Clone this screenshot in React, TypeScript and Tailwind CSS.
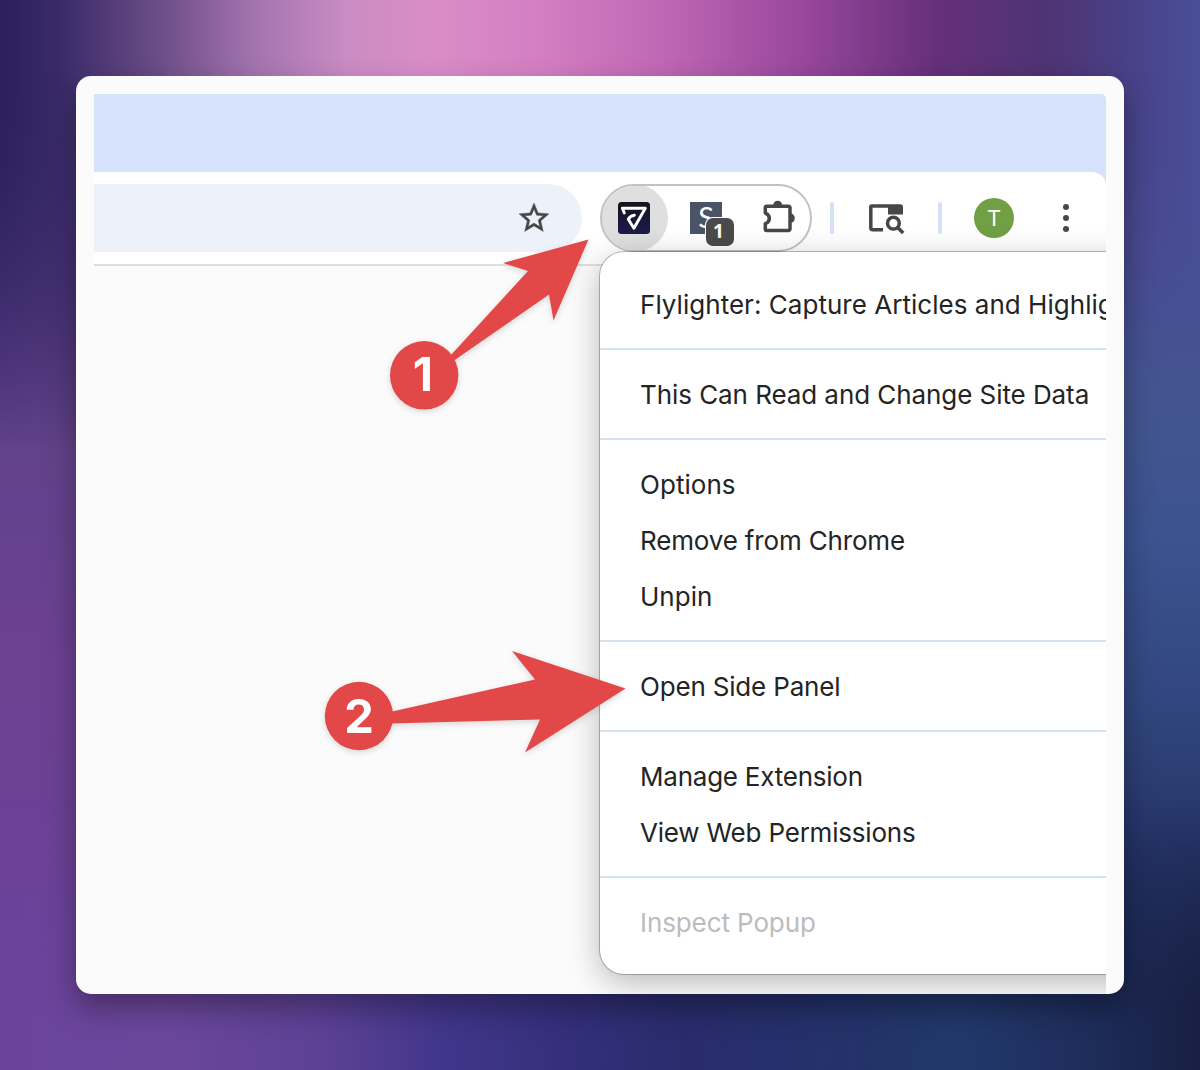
import React from "react";

const menuGroups: { label: string; tracking: string; muted?: boolean }[][] = [
  [{ label: "Flylighter: Capture Articles and Highlights", tracking: "tracking-[0.03px]" }],
  [{ label: "This Can Read and Change Site Data", tracking: "tracking-[-0.07px]" }],
  [
    { label: "Options", tracking: "tracking-[0.05px]" },
    { label: "Remove from Chrome", tracking: "tracking-[-0.16px]" },
    { label: "Unpin", tracking: "tracking-[0px]" },
  ],
  [{ label: "Open Side Panel", tracking: "tracking-[-0.18px]" }],
  [
    { label: "Manage Extension", tracking: "tracking-[-0.23px]" },
    { label: "View Web Permissions", tracking: "tracking-[-0.2px]" },
  ],
  [{ label: "Inspect Popup", tracking: "tracking-[-0.1px]", muted: true }],
];

function Wallpaper() {
  return (
    <div className="absolute inset-0 bg-[linear-gradient(90deg,#2b1f5e_0%,#3a2b68_5%,#6a4c86_13%,#a273ae_21%,#cb8cc4_29%,#d98dc8_36%,#d37fc2_45%,#c068b5_55%,#98479c_67%,#65307a_78%,#4f3372_87%,#483f85_93%,#494f98_100%)]">
      <div className="absolute inset-y-0 left-0 w-1/2 bg-[linear-gradient(180deg,#2e2160_0%,#39296a_15%,#4a3478_27%,#62428a_42%,#6c4192_62%,#6a429a_100%)] [mask-image:linear-gradient(180deg,transparent_7%,black_42%)]" />
      <div className="absolute inset-y-0 right-0 w-1/2 bg-[linear-gradient(180deg,#49468f_0%,#474f94_25%,#43558f_38%,#3c5390_50%,#32477f_65%,#253468_80%,#1a2348_100%)] [mask-image:linear-gradient(180deg,transparent_7%,black_34%)]" />
      <div className="absolute inset-x-0 bottom-0 h-[270px] bg-[linear-gradient(90deg,#6c439b_0%,#6b479b_14%,#5c4195_27%,#41368a_37%,#332f7a_48%,#292c6c_57%,#23336a_72%,#22386b_80%,#1e2c5a_91%,#182042_100%)] [mask-image:linear-gradient(180deg,transparent,black_80%)]" />
    </div>
  );
}

function StarIcon() {
  return (
    <svg width="36" height="36" viewBox="0 0 24 24" fill="#474747" stroke="#474747" strokeWidth="0.25">
      <path d="M22 9.24l-7.19-.62L12 2 9.19 8.63 2 9.24l5.46 4.73L5.82 21 12 17.27 18.18 21l-1.63-7.03L22 9.24zM12 15.4l-3.76 2.27 1-4.28-3.32-2.88 4.38-.38L12 6.1l1.71 4.04 4.38.38-3.32 2.88 1 4.28L12 15.4z" />
    </svg>
  );
}

function FlylighterIcon() {
  return (
    <svg width="32" height="32" viewBox="0 0 32 32">
      <defs>
        <linearGradient id="fly" x1="0" y1="0" x2="0" y2="1">
          <stop offset="0" stopColor="#14131d" />
          <stop offset="1" stopColor="#1c1c4c" />
        </linearGradient>
      </defs>
      <rect width="32" height="32" rx="3.5" fill="url(#fly)" />
      <path
        d="M6.3 11L4.4 6.200H27.300L15.900 26.200L10.300 17.200C11.600 14.900 13.600 13.500 16.400 13.200"
        fill="none"
        stroke="#fff"
        strokeWidth="2.900"
        strokeLinecap="round"
        strokeLinejoin="round"
      />
    </svg>
  );
}

function PuzzleIcon() {
  return (
    <svg width="36" height="36" viewBox="0 0 36 36">
      <path
        d="M4.800 6.200H26.500a1.500 1.500 0 0 1 1.500 1.500V29a1.500 1.500 0 0 1-1.500 1.500H4.800a1.500 1.500 0 0 1-1.500-1.500V23.600C5.800 22.800 7.300 21 7.300 18.300S5.800 14 3.300 13.100V7.700A1.500 1.500 0 0 1 4.800 6.200Z"
        fill="none"
        stroke="#474747"
        strokeWidth="3.500"
        strokeLinejoin="round"
      />
      <path d="M11.200 5.500a4.500 4.800 0 0 1 9 0ZM28.800 13.600a4 4.600 0 0 1 0 9.200Z" fill="#474747" />
    </svg>
  );
}

function TabSearchIcon() {
  return (
    <svg width="36" height="36" viewBox="0 0 36 36" fill="none" stroke="#474747">
      <path d="M14 29.800H3.800a2 2 0 0 1-2-2V6.800" strokeWidth="3.500" />
      <path d="M0 9V7a2.800 2.800 0 0 1 2.800-2.700H31.200A2.800 2.800 0 0 1 34 7V14.400H19V7.800H0Z" fill="#474747" stroke="none" />
      <circle cx="24.400" cy="23.200" r="5.900" strokeWidth="3.500" />
      <path d="M28.600 27.400L34.200 33" strokeWidth="3.500" />
    </svg>
  );
}

function Divider() {
  return <div className="h-8 w-1 shrink-0 rounded-sm bg-[#d5e1fa]" />;
}

function Toolbar() {
  return (
    <div className="bg-[#d6e2fb]">
      <div className="flex h-[94px] items-start rounded-tr-[14px] border-b-2 border-[#dedfe0] bg-white pt-3">
        <div className="flex h-[68px] w-[488px] shrink-0 items-center justify-end rounded-r-full bg-[#edf2fa] pr-[30px]">
          <StarIcon />
        </div>
        <div className="ml-[18px] flex h-[68px] w-[212px] shrink-0 items-center overflow-hidden rounded-full border-2 border-[#c2c2c2]">
          <div className="-ml-0.5 flex size-[68px] shrink-0 items-center justify-center rounded-full bg-[#dfdfdf] shadow-[inset_2px_0_0_0_#b5b5b5]">
            <FlylighterIcon />
          </div>
          <div className="relative ml-[22px] flex size-8 shrink-0 items-start justify-center bg-[#495466] font-['Lato'] text-[29px] leading-[30px] text-white">
            S
            <div className="absolute top-4 left-4 flex size-7 items-center justify-center rounded-[7px] bg-[#4b4b4b] pr-[3px] pb-px font-['Open_Sans'] text-[19px] leading-none font-bold shadow-[0_0_0_1px_#fff]">
              1
            </div>
          </div>
          <div className="ml-10 shrink-0">
            <PuzzleIcon />
          </div>
        </div>
        <div className="flex h-[68px] items-center pl-[18px]">
          <Divider />
          <div className="ml-[35px]">
            <TabSearchIcon />
          </div>
          <div className="ml-[33px]">
            <Divider />
          </div>
          <div className="ml-8 flex size-10 items-center justify-center rounded-full bg-[#719f45] font-['Roboto'] text-[22px] text-white">
            T
          </div>
          <div className="ml-[49px] flex flex-col gap-[5px]">
            <span className="size-1.5 rounded-full bg-[#474747]" />
            <span className="size-1.5 rounded-full bg-[#474747]" />
            <span className="size-1.5 rounded-full bg-[#474747]" />
          </div>
        </div>
      </div>
    </div>
  );
}

function ContextMenu() {
  return (
    <div className="absolute top-[158px] left-[506px] w-[640px] divide-y-2 divide-[#d6e2f2] rounded-3xl bg-white py-2 shadow-[0_0_0_1px_rgba(0,0,0,0.25),0_8px_32px_rgba(0,0,0,0.27)]">
      {menuGroups.map((group, i) => (
        <div key={i} className="py-4">
          {group.map((item) => (
            <div
              key={item.label}
              className={`flex h-14 items-center pt-px pl-10 text-[26px] whitespace-nowrap ${item.tracking} ${item.muted ? "text-[#bcbcbc]" : "text-[#242424]"}`}
            >
              {item.label}
            </div>
          ))}
        </div>
      ))}
    </div>
  );
}

function Annotations() {
  return (
    <svg
      className="absolute inset-0 drop-shadow-[0_2px_3px_rgba(0,0,0,0.15)]"
      width="1200"
      height="1070"
      viewBox="0 0 1200 1070"
    >
      <g fill="#e24848">
        <path d="M588.500 239.500L553.500 320.500L549 294.500L454 360.500L450 356L528 271L503 263Z" />
        <circle cx="424.200" cy="375.300" r="34.200" />
        <path d="M625.500 688.500L525 752.500L540 719.500L390 723.500V712L535 679.500L512 651Z" />
        <circle cx="359" cy="716" r="34.200" />
      </g>
      <g fill="#fff" fontFamily="Inter" fontWeight="700" fontSize="47" textAnchor="middle">
        <text x="423" y="391">1</text>
        <text x="359" y="733">2</text>
      </g>
    </svg>
  );
}

export default function App() {
  return (
    <main className="relative flex h-[1070px] w-[1200px] overflow-hidden p-[76px] font-['Inter',sans-serif]">
      <Wallpaper />
      <section className="relative flex-1 rounded-[15px] shadow-[0_14px_30px_rgba(0,0,0,0.34)]">
        <div className="h-full overflow-hidden rounded-[15px] bg-[#fbfbfb] px-[18px] pt-[18px]">
          <div className="relative h-full overflow-hidden">
            <div className="h-[78px] rounded-tr-[5px] bg-[#d6e2fb]" />
            <Toolbar />
            <ContextMenu />
          </div>
        </div>
      </section>
      <Annotations />
    </main>
  );
}
